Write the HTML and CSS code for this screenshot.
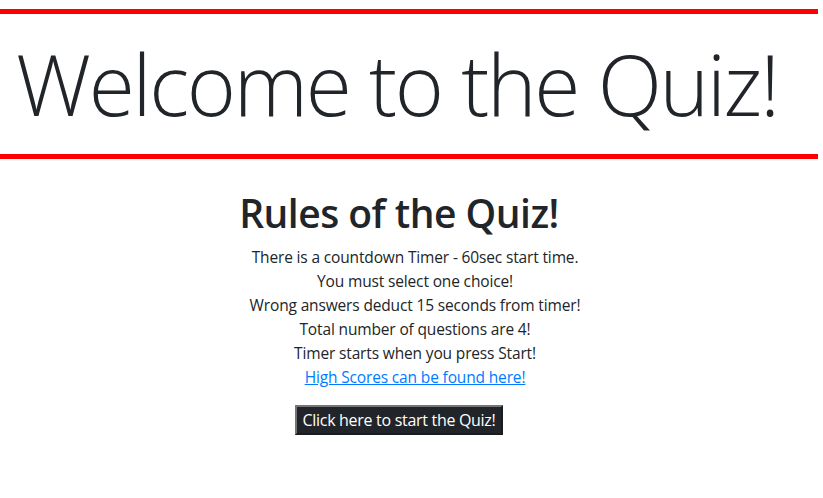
FILE: index.html
```html
<!DOCTYPE html>
<html lang="en">
<head>
<meta charset="utf-8">
<title>Quiz</title>
<link rel="stylesheet" href="styles.css">
</head>
<body>
<header class="banner">
  <h1 class="banner-title">Welcome to the Quiz!</h1>
</header>
<main class="rules">
  <h2 class="rules-title">Rules of the Quiz!</h2>
  <div class="rule-list">
    <p class="rule">There is a countdown Timer - 60sec start time.</p>
    <p class="rule">You must select one choice!</p>
    <p class="rule">Wrong answers deduct 15 seconds from timer!</p>
    <p class="rule">Total number of questions are 4!</p>
    <p class="rule">Timer starts when you press Start!</p>
    <p class="rule"><a class="link" href="#">High Scores can be found here!</a></p>
  </div>
  <div class="actions">
    <button class="start-btn" type="button">Click here to start the Quiz!</button>
  </div>
</main>
</body>
</html>
```
FILE: styles.css
```css
html, body {
  margin: 0;
  padding: 0;
  background: #fff;
}
body {
  font-family: "Open Sans", "Noto Sans", sans-serif;
  color: #212529;
  font-size: 16px;
  line-height: 24px;
}
.banner {
  width: 818px;
  margin-top: 9px;
  border-top: 5px solid #ff0000;
  border-bottom: 5px solid #ff0000;
  height: 140px;
  box-sizing: content-box;
  display: flex;
  align-items: center;
}
.banner-title {
  margin: 0 0 0 16px;
  font-weight: 300;
  font-size: 84px;
  line-height: 1.2;
  letter-spacing: -2.3px;
  color: #212529;
}
.rules {
  padding-top: 30px;
  text-align: center;
  width: 798px;
}
.rules-title {
  margin: 0 0 8px;
  font-size: 39px;
  font-weight: 600;
  line-height: 48px;
  letter-spacing: -0.5px;
}
.rule-list {
  padding-left: 32px;
}
.rule {
  margin: 0;
  font-size: 15.5px;
  letter-spacing: -0.15px;
}
.link {
  color: #007bff;
  text-decoration: underline;
}
.actions {
  margin-top: 16px;
}
.start-btn {
  font-family: inherit;
  font-size: 16px;
  line-height: 24px;
  color: #fff;
  background: #212529;
  border-style: solid;
  border-width: 2px;
  border-color: #767676 #1a1d20 #1a1d20 #767676;
  padding: 1px 6px;
  letter-spacing: -0.3px;
}
```
